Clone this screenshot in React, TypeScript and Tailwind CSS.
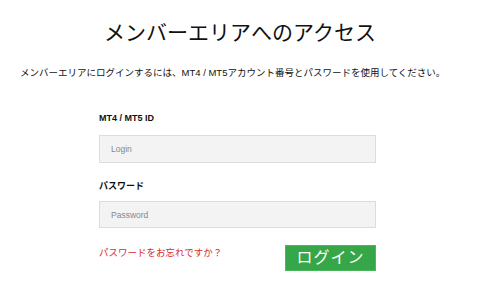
export default function App() {
  const font = { fontFamily: '"Liberation Sans", "Noto Sans CJK JP", sans-serif' }
  return (
    <div className="w-[480px] h-[287px] bg-white text-[#111]" style={font}>
      {/* Heading */}
      <h1 className="pt-[18px] text-center text-[21px] leading-[30px] font-normal">
        メンバーエリアへのアクセス
      </h1>
      <p className="mt-[18px] pl-[20px] text-[9.5px] leading-[14px] whitespace-nowrap">
        メンバーエリアにログインするには、MT4 / MT5アカウント番号とパスワードを使用してください。
      </p>

      {/* Form */}
      <div className="ml-[99px] w-[277px] mt-[32px]">
        <label className="block text-[9px] leading-[12px] font-bold">MT4 / MT5 ID</label>
        <input
          className="mt-[11px] block w-full h-[28px] px-[11px] bg-[#f3f3f3] border border-[#dcdcdc] text-[8.5px] placeholder:text-[#888] outline-none"
          placeholder="Login"
        />
        <label className="mt-[17px] block text-[9px] leading-[12px] font-bold">パスワード</label>
        <input
          type="password"
          className="mt-[9px] block w-full h-[27px] px-[11px] bg-[#f3f3f3] border border-[#dcdcdc] text-[8.5px] placeholder:text-[#888] outline-none"
          placeholder="Password"
        />
        <div className="mt-[17px] flex items-start justify-between">
          <a className="mt-[2px] text-[9.5px] leading-[12px] text-[#d9292f]">パスワードをお忘れですか？</a>
          <button className="w-[91px] h-[26px] bg-[#35a748] border border-[#4cb75c] text-white text-[16px] leading-[24px] tracking-[1px]">
            ログイン
          </button>
        </div>
      </div>
    </div>
  )
}
